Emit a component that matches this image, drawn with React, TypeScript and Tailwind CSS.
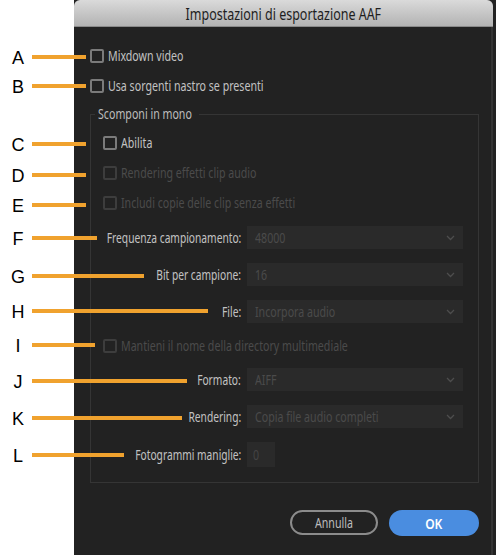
import React from "react";

const ui = "font-['Noto_Sans','Open_Sans',sans-serif]";

const marks = [
  { l: "A", y: 57, x2: 86 },
  { l: "B", y: 86, x2: 86 },
  { l: "C", y: 144, x2: 86 },
  { l: "D", y: 175, x2: 86 },
  { l: "E", y: 205, x2: 86 },
  { l: "F", y: 238, x2: 97 },
  { l: "G", y: 276, x2: 144 },
  { l: "H", y: 311, x2: 208 },
  { l: "I", y: 345, x2: 95 },
  { l: "J", y: 381, x2: 187 },
  { l: "K", y: 418, x2: 182 },
  { l: "L", y: 455, x2: 124 },
];

// the screenshot is horizontally squeezed, so text is narrowed the same way
function T({ children, right, className }: { children: React.ReactNode; right?: boolean; className?: string }) {
  return (
    <span
      className={
        "inline-block whitespace-nowrap " +
        (right ? "origin-right scale-x-[0.73] " : "origin-left scale-x-[0.76] ") +
        (className ?? "")
      }
    >
      {children}
    </span>
  );
}

function Check({ label, disabled }: { label: string; disabled?: boolean }) {
  return (
    <div className="flex h-[30px] items-center gap-[4px]">
      <span
        className={
          "h-[14px] w-[14px] shrink-0 rounded-[2px] border-2 " +
          (disabled ? "border-[#3d3d3d]" : "border-[#7b7b7b]")
        }
      />
      <T className={"text-[14px] leading-none " + (disabled ? "text-[#4b4b4b]" : "text-[#c2c2c2]")}>{label}</T>
    </div>
  );
}

function Chevron() {
  return (
    <svg width="9" height="6" viewBox="0 0 9 6" className="text-[#4d4d4d]">
      <polyline points="1,1 4.5,4.5 8,1" fill="none" stroke="currentColor" strokeWidth="1.3" />
    </svg>
  );
}

function Label({ children }: { children: React.ReactNode }) {
  return (
    <div className="flex w-[138px] shrink-0 justify-end">
      <T right className="text-[14px] leading-none text-[#c2c2c2]">
        {children}
      </T>
    </div>
  );
}

function Field({ label, value, className }: { label: string; value: string; className?: string }) {
  return (
    <div className={"flex items-center gap-[6px] " + (className ?? "")}>
      <Label>{label}</Label>
      <div className="flex h-[23px] w-[216px] items-center justify-between bg-[#2a2a2a] pl-[8px] pr-[8px]">
        <T className="text-[14px] leading-none text-[#4b4b4b]">{value}</T>
        <Chevron />
      </div>
    </div>
  );
}

export default function App() {
  return (
    <div className="relative h-[555px] w-[496px] overflow-hidden bg-white">
      {/* dialog */}
      <div className={"ml-[74px] flex h-[555px] w-[422px] flex-col bg-[#222222] " + ui}>
        <div className="flex h-[27px] w-[419px] items-center justify-center rounded-t-[6px] border-b border-[#8a8a8a] bg-gradient-to-b from-[#dadada] to-[#b3b3b3] pt-[1px] text-[16px] text-[#1e1e1e]">
          <span className="inline-block origin-center scale-x-[0.78] whitespace-nowrap">
            Impostazioni di esportazione AAF
          </span>
        </div>

        <div className="flex w-[419px] flex-1 flex-col border-r-2 border-[#343434] px-[16px] pt-[14px]">
          <Check label="Mixdown video" />
          <Check label="Usa sorgenti nastro se presenti" />

          <fieldset className="mt-[4px] w-[389px] border border-[#353535] pb-[15px] pl-[12px]">
            <legend className="ml-[-8px] w-[104px] px-[3px] text-[14px] leading-[18px] text-[#bdbdbd]">
              <T>Scomponi in mono</T>
            </legend>
            <div className="mt-[5px] flex flex-col">
              <Check label="Abilita" />
              <Check label="Rendering effetti clip audio" disabled />
              <Check label="Includi copie delle clip senza effetti" disabled />
              <Field className="mt-[8px]" label="Frequenza campionamento:" value="48000" />
              <Field className="mt-[14px]" label="Bit per campione:" value="16" />
              <Field className="mt-[14px]" label="File:" value="Incorpora audio" />
              <div className="mt-[8px]">
                <Check label="Mantieni il nome della directory multimediale" disabled />
              </div>
              <Field className="mt-[7px]" label="Formato:" value="AIFF" />
              <Field className="mt-[14px]" label="Rendering:" value="Copia file audio completi" />
              <div className="mt-[14px] flex items-center gap-[6px]">
                <Label>Fotogrammi maniglie:</Label>
                <div className="flex h-[25px] w-[28px] items-center bg-[#2a2a2a] pl-[6px] text-[14px] text-[#444]">
                  <T>0</T>
                </div>
              </div>
            </div>
          </fieldset>

          <div className="mt-[27px] flex w-[389px] justify-end gap-[11px]">
            <button className="flex h-[25px] w-[88px] items-center justify-center rounded-full border-2 border-[#8c8c8c] text-[14px] text-[#bdbdbd]">
              <span className="inline-block origin-center scale-x-[0.76]">Annulla</span>
            </button>
            <button className="flex h-[26px] w-[90px] items-center justify-center rounded-full bg-[#4a8de0] text-[15px] font-semibold text-white">
              <span className="inline-block origin-center scale-x-[0.8]">OK</span>
            </button>
          </div>
        </div>
      </div>

      {/* annotation callouts */}
      <div className="pointer-events-none absolute inset-0">
        {marks.map((m) => (
          <React.Fragment key={m.l}>
            <span
              className="absolute left-[8px] w-[20px] text-center font-['Liberation_Sans',Arial,sans-serif] text-[18px] leading-[20px] text-black"
              style={{ top: m.y - 9 }}
            >
              {m.l}
            </span>
            <span
              className="absolute left-[32px] h-[4px] bg-[#f0a22e]"
              style={{ top: m.y - 2, width: m.x2 - 32 }}
            />
          </React.Fragment>
        ))}
      </div>
    </div>
  );
}
